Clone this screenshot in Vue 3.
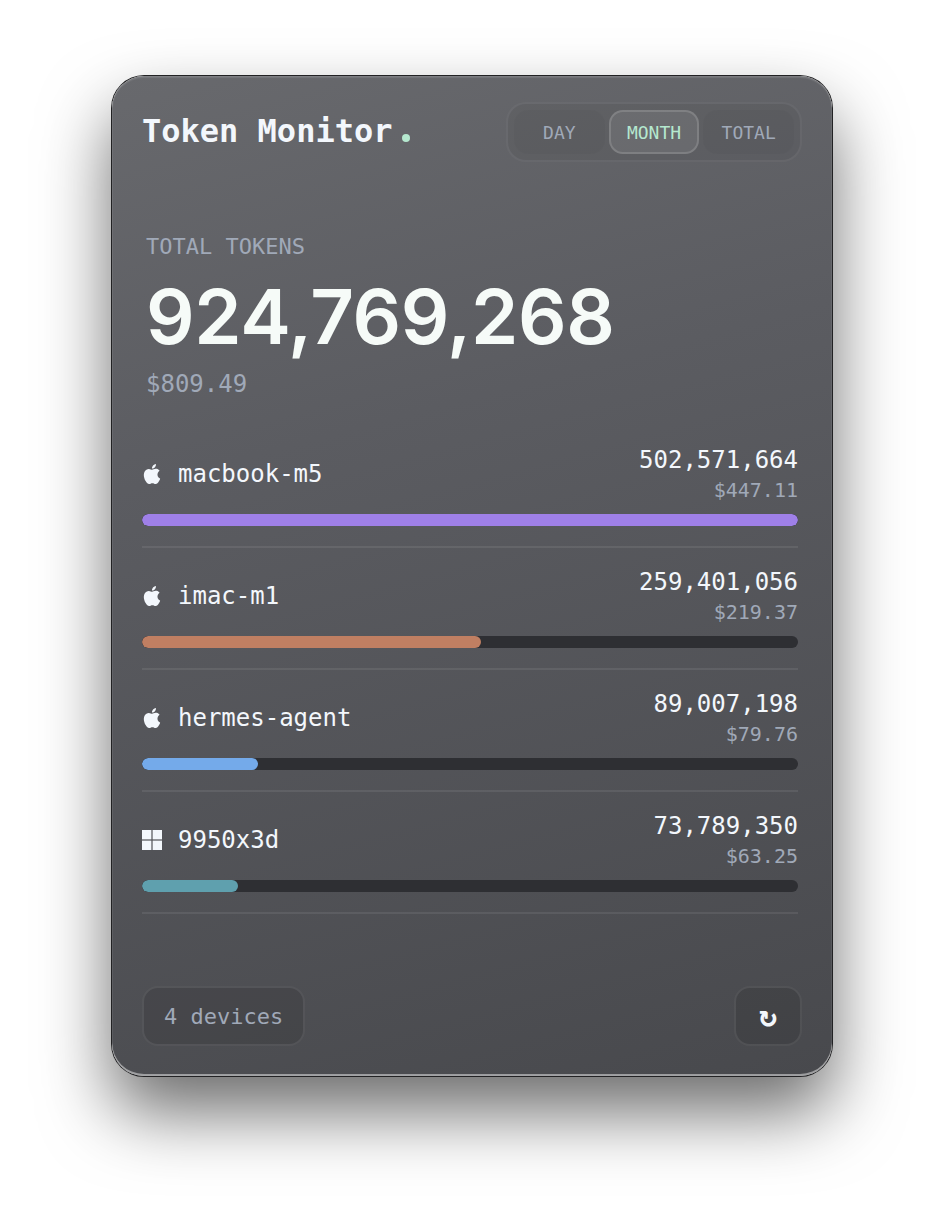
<template>
  <div class="page">
    <div class="card">
      <header class="top">
        <div class="brand">Token Monitor<span class="dot"></span></div>
        <div class="tabs">
          <button
            v-for="tab in tabs"
            :key="tab"
            class="tab"
            :class="{ active: tab === current }"
          >{{ tab }}</button>
        </div>
      </header>

      <section class="summary">
        <div class="label">TOTAL TOKENS</div>
        <div class="total">924,769,268</div>
        <div class="cost">$809.49</div>
      </section>

      <section class="devices">
        <div v-for="d in devices" :key="d.name" class="device">
          <div class="device-row">
            <div class="device-name">
              <svg v-if="d.os === 'mac'" class="os-icon" viewBox="0 0 24 24" fill="currentColor">
                <path d="M12.152 6.896c-.948 0-2.415-1.078-3.96-1.04-2.04.027-3.91 1.183-4.961 3.014-2.117 3.675-.546 9.103 1.519 12.09 1.013 1.454 2.208 3.09 3.792 3.039 1.52-.065 2.09-.987 3.935-.987 1.831 0 2.35.987 3.96.948 1.637-.026 2.676-1.48 3.676-2.948 1.156-1.688 1.636-3.325 1.662-3.415-.039-.013-3.182-1.221-3.22-4.857-.026-3.04 2.48-4.494 2.597-4.559-1.429-2.09-3.623-2.324-4.39-2.376-2-.156-3.675 1.09-4.61 1.09zM15.53 3.83c.843-1.012 1.4-2.427 1.245-3.83-1.207.052-2.662.805-3.532 1.818-.78.896-1.454 2.338-1.273 3.714 1.338.104 2.715-.688 3.559-1.701" />
              </svg>
              <svg v-else class="os-icon win" viewBox="0 0 20 20" fill="currentColor">
                <rect x="0" y="0" width="9.4" height="9.4" />
                <rect x="10.6" y="0" width="9.4" height="9.4" />
                <rect x="0" y="10.6" width="9.4" height="9.4" />
                <rect x="10.6" y="10.6" width="9.4" height="9.4" />
              </svg>
              <span>{{ d.name }}</span>
            </div>
            <div class="device-nums">
              <div class="tokens">{{ d.tokens }}</div>
              <div class="price">{{ d.price }}</div>
            </div>
          </div>
          <div class="track">
            <div class="fill" :style="{ width: d.pct + '%', background: d.color }"></div>
          </div>
        </div>
      </section>

      <footer class="bottom">
        <div class="count">4 devices</div>
        <button class="refresh">↻</button>
      </footer>
    </div>
  </div>
</template>

<script setup>
const tabs = ['DAY', 'MONTH', 'TOTAL']
const current = 'MONTH'

const devices = [
  { name: 'macbook-m5', os: 'mac', tokens: '502,571,664', price: '$447.11', pct: 100, color: '#9f80e8' },
  { name: 'imac-m1', os: 'mac', tokens: '259,401,056', price: '$219.37', pct: 51.7, color: '#c07f62' },
  { name: 'hermes-agent', os: 'mac', tokens: '89,007,198', price: '$79.76', pct: 17.7, color: '#74aaea' },
  { name: '9950x3d', os: 'win', tokens: '73,789,350', price: '$63.25', pct: 14.7, color: '#5fa0ae' },
]
</script>

<style>
html, body {
  background: #ffffff;
}
</style>

<style scoped>
.page {
  width: 944px;
  height: 1224px;
  padding-top: 76px;
  box-sizing: border-box;
  background: #ffffff;
  font-family: "DejaVu Sans Mono", monospace;
}

.card {
  width: 720px;
  height: 1000px;
  margin: 0 auto;
  box-sizing: border-box;
  padding: 26px 30px 30px;
  display: flex;
  flex-direction: column;
  border-radius: 32px;
  background: linear-gradient(165deg, #68696d 0%, #5b5c61 35%, #48494d 100%);
  box-shadow:
    0 0 0 1px #222224,
    inset 0 2px 1px rgba(255, 255, 255, 0.1),
    inset 0 -2px 0 rgba(255, 255, 255, 0.45),
    inset 0 0 0 1px rgba(255, 255, 255, 0.07),
    0 36px 70px rgba(0, 0, 0, 0.58);
}

.top {
  display: flex;
  justify-content: space-between;
  align-items: center;
}

.brand {
  margin-top: -2px;
  font-size: 32px;
  font-weight: 700;
  color: #f3f7fc;
  display: flex;
  align-items: baseline;
}

.dot {
  width: 8px;
  height: 8px;
  margin-left: 10px;
  border-radius: 50%;
  background: #b5e8cf;
}

.tabs {
  width: 296px;
  height: 60px;
  box-sizing: border-box;
  padding: 6px;
  display: flex;
  gap: 4px;
  border: 2px solid rgba(255, 255, 255, 0.06);
  border-radius: 20px;
  background: rgba(0, 0, 0, 0.04);
}

.tab {
  flex: 1;
  height: 44px;
  padding: 0;
  border: 2px solid transparent;
  border-radius: 14px;
  background: rgba(0, 0, 0, 0.025);
  font-family: inherit;
  font-size: 18px;
  color: #a0a9b8;
}

.tab.active {
  border-color: rgba(255, 255, 255, 0.14);
  background: rgba(255, 255, 255, 0.08);
  color: #b5e8cf;
}

.summary {
  margin-top: 72px;
  padding-left: 4px;
}

.label {
  font-size: 22px;
  line-height: 26px;
  color: #a0a9b8;
}

.total {
  margin-top: 10px;
  font-family: Inter, sans-serif;
  font-size: 76px;
  font-weight: 600;
  line-height: 92px;
  letter-spacing: -0.3px;
  color: #f6fbf8;
}

.cost {
  margin-top: 8px;
  font-size: 24px;
  line-height: 28px;
  color: #a0a9b8;
}

.devices {
  margin-top: 28px;
  margin-right: 4px;
}

.device {
  height: 122px;
  box-sizing: border-box;
  padding-top: 19px;
  border-bottom: 2px solid rgba(255, 255, 255, 0.08);
}

.device-row {
  display: flex;
  justify-content: space-between;
  align-items: center;
}

.device-name {
  display: flex;
  align-items: center;
  gap: 16px;
  padding-bottom: 2px;
  font-size: 24px;
  color: #f3f7fc;
}

.os-icon {
  width: 20px;
  height: 22px;
}

.os-icon.win {
  height: 20px;
}

.device-nums {
  text-align: right;
}

.tokens {
  font-size: 24px;
  line-height: 30px;
  color: #f3f7fc;
}

.price {
  font-size: 20px;
  line-height: 30px;
  color: #a0a9b8;
}

.track {
  margin-top: 9px;
  height: 12px;
  border-radius: 6px;
  background: #2e2f33;
  overflow: hidden;
}

.fill {
  height: 100%;
  border-radius: 6px;
}

.bottom {
  margin-top: auto;
  display: flex;
  justify-content: space-between;
}

.count {
  height: 60px;
  box-sizing: border-box;
  padding: 0 20px;
  display: flex;
  align-items: center;
  border: 2px solid rgba(255, 255, 255, 0.08);
  border-radius: 16px;
  background: rgba(0, 0, 0, 0.1);
  font-size: 22px;
  color: #a0a9b8;
}

.refresh {
  width: 68px;
  height: 60px;
  padding: 0 0 2px;
  border: 2px solid rgba(255, 255, 255, 0.08);
  border-radius: 16px;
  background: rgba(0, 0, 0, 0.1);
  font-family: inherit;
  font-size: 30px;
  font-weight: 700;
  color: #f3f7fc;
}
</style>
